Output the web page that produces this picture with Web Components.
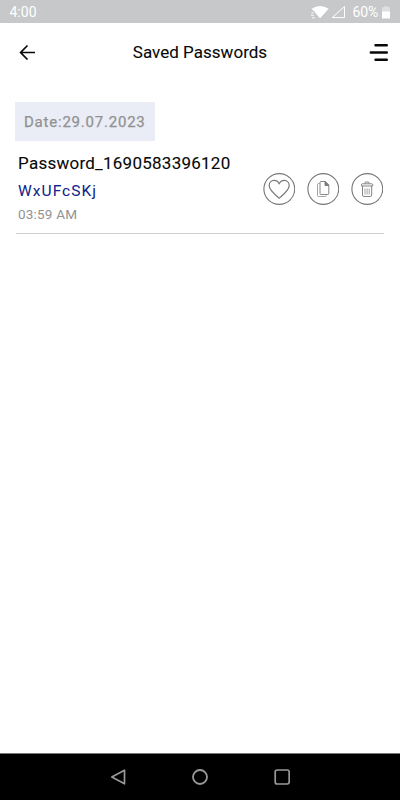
<!DOCTYPE html>
<html lang="en">
<head>
<meta charset="utf-8">
<meta name="viewport" content="width=device-width, initial-scale=1">
<title>Saved Passwords</title>
<style>
  :root {
    --sp-ink: #080808;
    --sp-muted: #929292;
    --sp-accent: #10258a;
    --sp-line: #cfcfcf;
  }
  body {
    margin: 0;
    background: #fff;
    color: var(--sp-ink);
    font-family: Roboto, "Liberation Sans", sans-serif;
  }
</style>
</head>
<body>
<app-screen>
  <status-bar slot="top" time="4:00" battery="60%"></status-bar>
  <app-header slot="top">Saved Passwords</app-header>
  <date-group date="29.07.2023">
    <password-item name="Password_1690583396120" time="03:59 AM">WxUFcSKj</password-item>
  </date-group>
  <nav-bar slot="bottom"></nav-bar>
</app-screen>

<script>
(function () {
  'use strict';

  // Registers an element whose shadow root is cloned from a template
  function define(tag, html, attrs) {
    const template = document.createElement('template');
    template.innerHTML = '<style>:host,*{box-sizing:border-box}svg{display:block}</style>' + html;

    customElements.define(tag, class extends HTMLElement {
      constructor() {
        super();
        this.attachShadow({ mode: 'open' }).appendChild(template.content.cloneNode(true));
      }
      connectedCallback() {
        (attrs || []).forEach((a) => {
          this.shadowRoot.querySelector('.' + a).textContent = this.getAttribute(a) || '';
        });
      }
    });
  }

  define('app-screen', `
    <style>
      :host { display: flex; flex-direction: column; height: 800px; width: 400px; overflow: hidden; }
      main { flex: 1; padding: 22px 16px 0 15px; }
    </style>
    <slot name="top"></slot>
    <main><slot></slot></main>
    <slot name="bottom"></slot>
  `);

  define('status-bar', `
    <style>
      :host { display: flex; align-items: center; height: 23px; padding: 1px 10px 0 9.5px; background: #c7c8ca; color: #fff; font-size: 14px; flex-shrink: 0; }
      .time { flex: 1; }
      .battery { margin: 0 4px 0 6px; letter-spacing: -.15px; }
    </style>
    <span class="time"></span>
    <svg width="36" height="16" viewBox="0 0 36 16">
      <path d="M1.600 4.800Q10-.8 18.600 4.800L10.100 14.200Z" fill="#fff"/>
      <path d="M0 8.500H4.500M0 11.500H5M1 14H5.500" stroke="#c7c8ca" stroke-width="3"/>
      <path d="M1.500 8.700H3.500M1 11.200H3.800M2 13.800H4.600" stroke="#fff" stroke-width="1"/>
      <path d="M34.500 2.500V13.600H22.200Z" fill="none" stroke="#fff" stroke-width="1"/>
    </svg>
    <span class="battery"></span>
    <svg width="8" height="14" viewBox="0 0 8 14">
      <path d="M2.500 1H5.500V2.200H8V7H0V2.200H2.500Z" fill="#dedfe0"/>
      <path d="M0 6.500H8V13.500H0Z" fill="#fff"/>
    </svg>
  `, ['time', 'battery']);

  define('app-header', `
    <style>
      :host { display: grid; grid-template-columns: 60px 1fr 60px; align-items: center; height: 57px; flex-shrink: 0; }
      h1 { margin: 0; text-align: center; font-size: 17px; font-weight: 400; line-height: 20px; letter-spacing: .02px; white-space: nowrap; -webkit-text-stroke: .1px; }
      .back { margin-left: 19px; }
      .menu { margin-left: 29px; }
    </style>
    <svg class="back" width="17" height="16" viewBox="0 0 17 16" fill="none" stroke="#080808" stroke-width="1.700">
      <path d="M16 8.500H2M8.500 1.500L1.600 8.500L8.500 15.500"/>
    </svg>
    <h1><slot></slot></h1>
    <svg class="menu" width="20" height="18" viewBox="0 0 20 18" fill="none" stroke="#080808" stroke-width="2.400" stroke-linecap="round">
      <path d="M6.500 2.300H17.800M1.800 9.500H17.800M6.500 16.700H17.800"/>
    </svg>
  `);

  define('date-group', `
    <style>
      :host { display: block; }
      .label { display: inline-flex; align-items: center; width: 140px; height: 39px; padding: 1px 0 0 9px; background: #eaecf6; color: var(--sp-muted); font-size: 15px; font-weight: 400; letter-spacing: .78px; white-space: nowrap; vertical-align: top; -webkit-text-stroke: .25px; }
    </style>
    <div class="label">Date:<span class="date"></span></div>
    <slot></slot>
  `, ['date']);

  define('password-item', `
    <style>
      :host { display: flex; align-items: flex-start; justify-content: space-between; height: 93px; margin-left: 1px; padding: 12px 1px 0 2px; border-bottom: 1px solid var(--sp-line); white-space: nowrap; }
      .info { width: 220px; }
      .name { font-size: 17px; line-height: 20px; letter-spacing: .25px; -webkit-text-stroke: .1px; }
      .value { margin-top: 8px; color: var(--sp-accent); font-size: 15.5px; line-height: 20px; letter-spacing: 1.05px; -webkit-text-stroke: .05px; }
      .time { margin-top: 4px; color: var(--sp-muted); font-size: 13.5px; line-height: 18px; letter-spacing: .2px; }
      .actions { display: flex; gap: 12px; margin-top: 20px; }
    </style>
    <div class="info">
      <div class="name"></div>
      <div class="value"><slot></slot></div>
      <div class="time"></div>
    </div>
    <div class="actions">
      <round-action icon="heart"></round-action>
      <round-action icon="copy"></round-action>
      <round-action icon="trash"></round-action>
    </div>
  `, ['name', 'time']);

  const ICONS = {
    heart: '<path d="M16.200 25.200C12.500 21.900 6.200 17.300 6.200 12.500C6.200 9.600 8.300 7.300 11.100 7.300C13.400 7.300 15.300 8.600 16.200 10.900C17.100 8.600 19 7.300 21.300 7.300C24.100 7.300 26.200 9.600 26.200 12.500C26.200 17.300 19.900 21.900 16.200 25.200Z" stroke-width="1.200"/>',
    copy: '<path d="M14 8.500H18.500L21.800 12V20.500Q21.800 21.500 20.800 21.500H14Q13 21.500 13 20.500V9.500Q13 8.500 14 8.500Z"/><path d="M18 8.500V12.500H21.800Z" fill="#777"/><path d="M12.800 10.500H11.500Q10.500 10.500 10.500 11.500V22.500Q10.500 23.500 11.500 23.500H18.500Q19.300 23.500 19.300 22.500" stroke="#999"/>',
    trash: '<path d="M10.500 13V11.500Q10.500 10.800 11.500 10.800H20.700Q21.700 10.800 21.700 11.500V13ZM14 10.500V9.800Q14 9 14.800 9H17.200Q18 9 18 9.800V10.500M11.500 13V22Q11.500 23.500 13 23.500H19.200Q20.700 23.500 20.700 22V13"/><path d="M14 15.500V21.500M16.100 15.500V21.500M18.200 15.500V21.500" stroke="#999"/>'
  };

  class RoundAction extends HTMLElement {
    constructor() {
      super();
      this.attachShadow({ mode: 'open' });
    }
    connectedCallback() {
      this.shadowRoot.innerHTML = `
        <style>
          :host { display: block; width: 32px; height: 32px; }
          svg { display: block; }
        </style>
        <svg width="32" height="32" viewBox="0 0 32 32" fill="none" stroke="#777" stroke-width=".9" stroke-linejoin="round">
          <circle cx="16.300" cy="16" r="15.400" stroke-width="1.100"/>
          ${ICONS[this.getAttribute('icon')] || ''}
        </svg>`;
    }
  }
  customElements.define('round-action', RoundAction);

  define('nav-bar', `
    <style>
      :host { display: flex; align-items: center; justify-content: center; gap: 66px; height: 47px; background: #000; border-top: 1px solid #777; flex-shrink: 0; }
    </style>
    <svg width="16" height="16" viewBox="0 0 16 16" fill="none" stroke="#999" stroke-width="1.700" stroke-linejoin="round">
      <path d="M14.500 1.200V14.800L1.800 8Z"/>
    </svg>
    <svg width="16" height="16" viewBox="0 0 16 16" fill="none" stroke="#999" stroke-width="1.800">
      <circle cx="8" cy="8" r="7"/>
    </svg>
    <svg width="16" height="16" viewBox="0 0 16 16" fill="none" stroke="#999" stroke-width="1.700">
      <rect x="1.200" y="1" width="14" height="14" rx="2"/>
    </svg>
  `);
})();
</script>
</body>
</html>
